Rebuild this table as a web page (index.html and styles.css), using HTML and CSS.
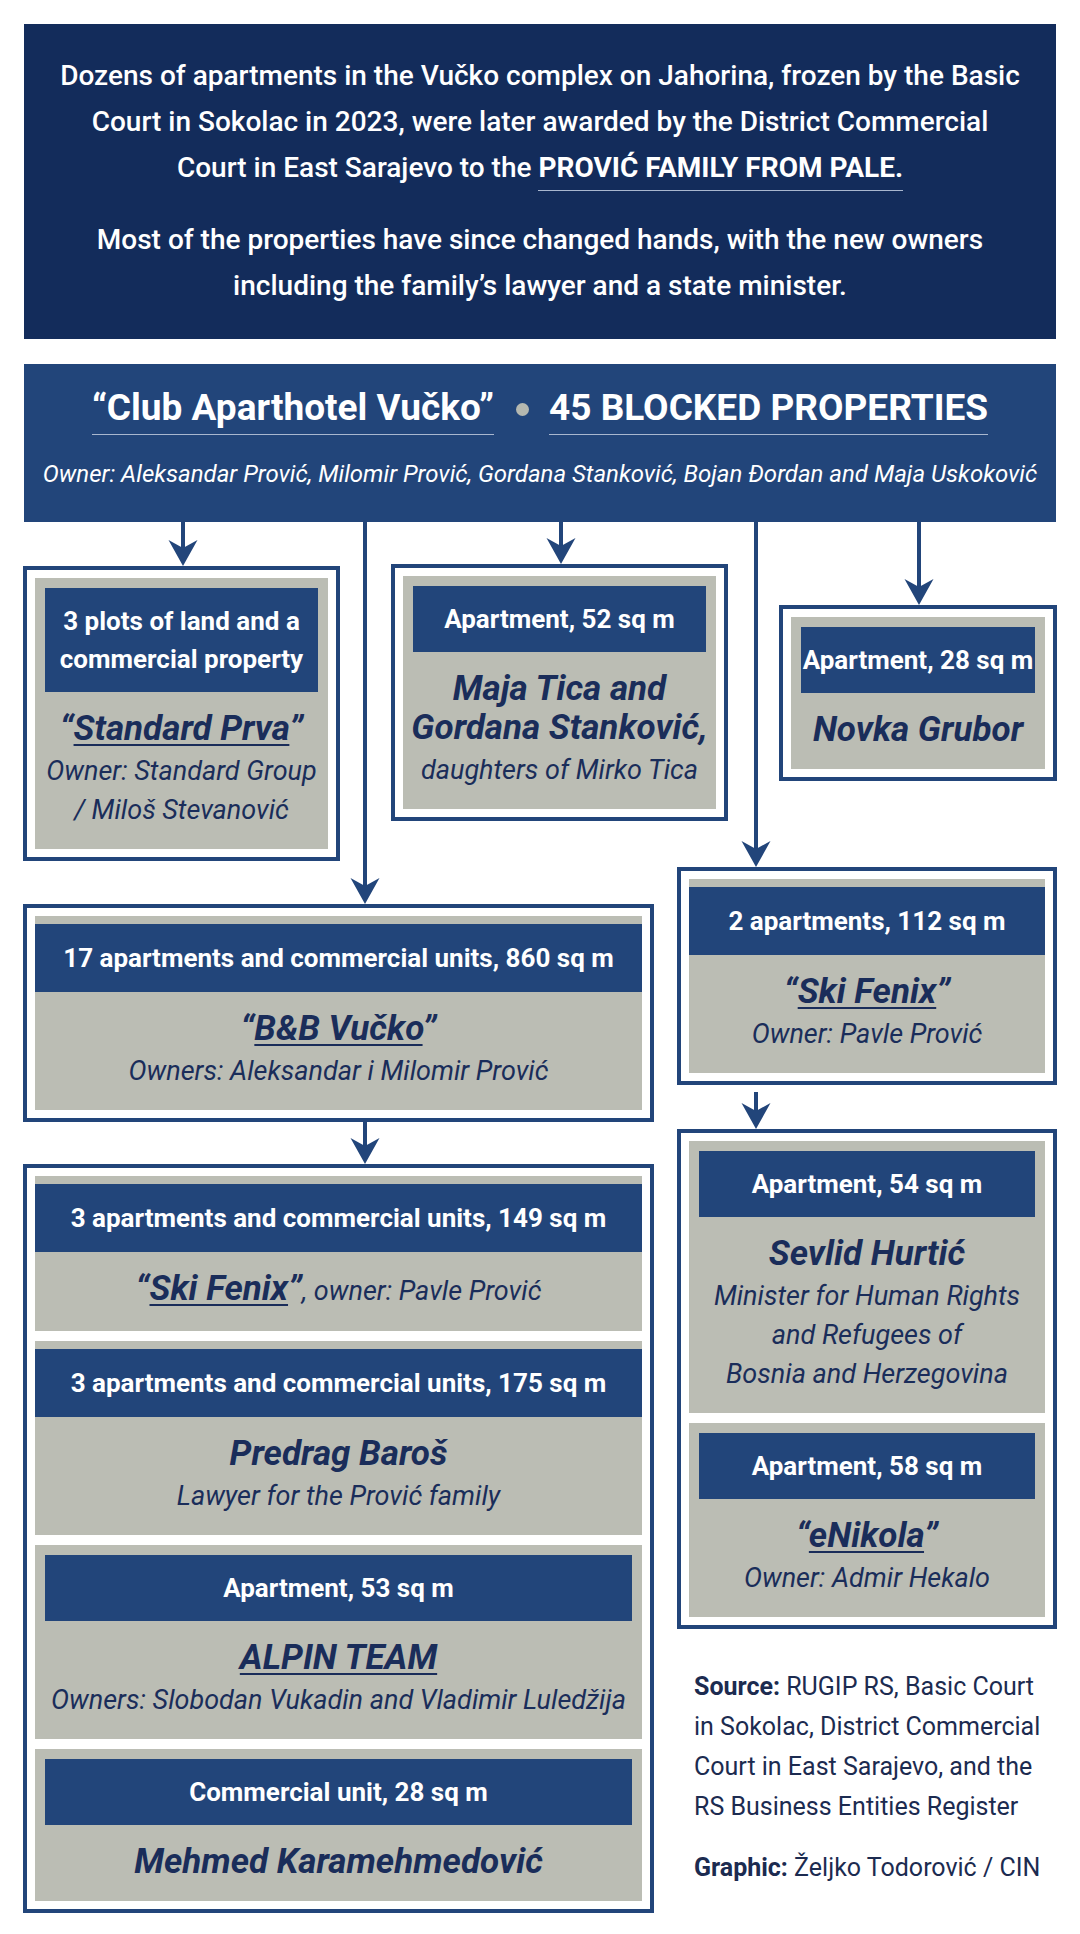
FILE: index.html
```html
<!DOCTYPE html>
<html lang="en">
<head>
<meta charset="utf-8">
<title>Club Aparthotel Vučko</title>
<link rel="stylesheet" href="styles.css">
</head>
<body>
<div class="page">
  <section class="intro">
    <p>Dozens of apartments in the Vučko complex on Jahorina, frozen by the Basic<br>Court in Sokolac in 2023, were later awarded by the District Commercial<br>Court in East Sarajevo to the <strong class="hl">PROVIĆ FAMILY FROM PALE.</strong></p>
    <p>Most of the properties have since changed hands, with the new owners<br>including the family’s lawyer and a state minister.</p>
  </section>

  <section class="head">
    <h1 class="head-title"><span class="ul">“Club Aparthotel Vučko”</span><span class="dot"></span><span class="ul">45 BLOCKED PROPERTIES</span></h1>
    <p class="head-owner">Owner: Aleksandar Prović, Milomir Prović, Gordana Stanković, Bojan Đordan and Maja Uskoković</p>
  </section>

  <div class="chart">
    <svg class="links" width="1034" height="700" viewBox="0 0 1034 700" aria-hidden="true">
      <g stroke="#22457a" stroke-width="4" fill="none">
        <line x1="160" y1="0" x2="160" y2="32"/>
        <line x1="342" y1="0" x2="342" y2="370"/>
        <line x1="538" y1="0" x2="538" y2="30"/>
        <line x1="733" y1="0" x2="733" y2="333"/>
        <line x1="896" y1="0" x2="896" y2="71"/>
        <line x1="342" y1="590" x2="342" y2="630"/>
        <line x1="733" y1="570" x2="733" y2="595"/>
      </g>
      <g fill="#22457a">
        <polygon points="145.5,18 160,26 174.5,18 160,44"/>
        <polygon points="327.5,356 342,364 356.5,356 342,382"/>
        <polygon points="523.5,16 538,24 552.5,16 538,42"/>
        <polygon points="718.5,319 733,327 747.5,319 733,345"/>
        <polygon points="881.5,57 896,65 910.5,57 896,83"/>
        <polygon points="327.5,616 342,624 356.5,616 342,642"/>
        <polygon points="718.5,581 733,589 747.5,581 733,607"/>
      </g>
    </svg>

    <div class="row-top">
      <div class="card card-a">
        <div class="panel">
          <div class="label">3 plots of land and a<br>commercial property</div>
          <div class="body">
            <div class="name">“<u>Standard Prva</u>”</div>
            <div class="sub">Owner: Standard Group<br>/ Miloš Stevanović</div>
          </div>
        </div>
      </div>
      <div class="card card-b">
        <div class="panel">
          <div class="label">Apartment, 52 sq m</div>
          <div class="body">
            <div class="name">Maja Tica and<br>Gordana Stanković,</div>
            <div class="sub">daughters of Mirko Tica</div>
          </div>
        </div>
      </div>
      <div class="card card-c">
        <div class="panel">
          <div class="label">Apartment, 28 sq m</div>
          <div class="body">
            <div class="name">Novka Grubor</div>
          </div>
        </div>
      </div>
    </div>

    <div class="row-bottom">
      <div class="col col-left">
        <div class="card">
          <div class="panel panel-wide">
            <div class="label wide">17 apartments and commercial units, 860 sq m</div>
            <div class="body">
              <div class="name">“<u>B&amp;B Vučko</u>”</div>
              <div class="sub">Owners: Aleksandar i Milomir Prović</div>
            </div>
          </div>
        </div>
        <div class="card card-big">
          <div class="panel panel-wide">
            <div class="label wide">3 apartments and commercial units, 149 sq m</div>
            <div class="body">
              <div class="name">“<u>Ski Fenix</u>”<span class="sub-inline">, owner: Pavle Prović</span></div>
            </div>
          </div>
          <div class="panel panel-wide">
            <div class="label wide">3 apartments and commercial units, 175 sq m</div>
            <div class="body">
              <div class="name">Predrag Baroš</div>
              <div class="sub">Lawyer for the Prović family</div>
            </div>
          </div>
          <div class="panel">
            <div class="label">Apartment, 53 sq m</div>
            <div class="body">
              <div class="name"><u>ALPIN TEAM</u></div>
              <div class="sub">Owners: Slobodan Vukadin and Vladimir Luledžija</div>
            </div>
          </div>
          <div class="panel">
            <div class="label">Commercial unit, 28 sq m</div>
            <div class="body">
              <div class="name">Mehmed Karamehmedović</div>
            </div>
          </div>
        </div>
      </div>

      <div class="col col-right">
        <div class="card">
          <div class="panel panel-wide">
            <div class="label wide">2 apartments, 112 sq m</div>
            <div class="body">
              <div class="name">“<u>Ski Fenix</u>”</div>
              <div class="sub">Owner: Pavle Prović</div>
            </div>
          </div>
        </div>
        <div class="card card-pair">
          <div class="panel">
            <div class="label">Apartment, 54 sq m</div>
            <div class="body">
              <div class="name">Sevlid Hurtić</div>
              <div class="sub">Minister for Human Rights<br>and Refugees of<br>Bosnia and Herzegovina</div>
            </div>
          </div>
          <div class="panel">
            <div class="label">Apartment, 58 sq m</div>
            <div class="body">
              <div class="name">“<u>eNikola</u>”</div>
              <div class="sub">Owner: Admir Hekalo</div>
            </div>
          </div>
        </div>
        <div class="source">
          <p><b>Source:</b> RUGIP RS, Basic Court<br>in Sokolac, District Commercial<br>Court in East Sarajevo, and the<br>RS Business Entities Register</p>
          <p><b>Graphic:</b> Željko Todorović / CIN</p>
        </div>
      </div>
    </div>
  </div>
</div>
</body>
</html>
```

FILE: styles.css
```css
* { box-sizing: border-box; }

html, body {
  margin: 0;
  padding: 0;
  background: #ffffff;
}

body {
  font-family: Roboto, "Liberation Sans", Arial, sans-serif;
  color: #1a2d5a;
}

.page {
  width: 1080px;
  padding: 24px 23px 20px;
}

/* Intro block */
.intro {
  margin: 0 1px;
  background: #132c5b;
  color: #ffffff;
  text-align: center;
  padding: 29px 0 30px;
  font-size: 28px;
  font-weight: 500;
  line-height: 46px;
  white-space: nowrap;
}

.intro p {
  margin: 0;
}

.intro p + p {
  margin-top: 26px;
}

.intro .hl {
  font-weight: 700;
  padding-bottom: 6px;
  border-bottom: 1px solid #a9b7cf;
}

/* Header block */
.head {
  margin: 25px 1px 0;
  background: #22457a;
  color: #ffffff;
  text-align: center;
  padding: 20px 0 0;
  height: 158px;
}

.head-title {
  margin: 0;
  font-size: 37px;
  font-weight: 700;
  line-height: 44px;
  display: flex;
  justify-content: center;
  align-items: center;
  white-space: nowrap;
}

.head-title .ul {
  padding-bottom: 6px;
  border-bottom: 1px solid #a9b7cf;
  line-height: 40px;
  margin-top: 4px;
}

.dot {
  width: 13px;
  height: 13px;
  border-radius: 50%;
  background: #b5b8b0;
  margin: 0 20px 0 22px;
}

.head-owner {
  margin: 24px 0 0;
  font-size: 24px;
  font-style: italic;
  line-height: 30px;
  white-space: nowrap;
}

/* Chart */
.chart {
  position: relative;
  width: 1034px;
}

.links {
  position: absolute;
  left: 0;
  top: 0;
  z-index: 0;
}

.row-top {
  display: flex;
  align-items: flex-start;
  gap: 51px;
}

.row-bottom {
  display: flex;
  align-items: flex-start;
  gap: 23px;
}

.col {
  display: flex;
  flex-direction: column;
}

.col-left {
  width: 631px;
  margin-top: 43px;
  gap: 42px;
}

.col-right {
  width: 380px;
  margin-top: 6px;
  gap: 44px;
}

.card {
  position: relative;
  z-index: 1;
  background: #ffffff;
  border: 4px solid #22457a;
  padding: 8px;
  display: flex;
  flex-direction: column;
  gap: 10px;
}

.card-a { width: 317px; margin-top: 44px; }
.card-b { width: 337px; margin-top: 42px; }
.card-c { width: 278px; margin-top: 83px; }

.panel {
  background: #bbbdb4;
  padding: 10px 10px 19px;
}

.panel-wide {
  padding-top: 8px;
}

.label {
  background: #22457a;
  color: #ffffff;
  font-size: 26px;
  font-weight: 700;
  line-height: 38px;
  padding: 14px 0;
  text-align: center;
  white-space: nowrap;
}

.label.wide {
  margin: 0 -10px;
  padding: 15px 0;
}

.body {
  margin: 0 -10px;
  padding-top: 17px;
  text-align: center;
  white-space: nowrap;
  color: #1a2d5a;
}

.name {
  font-size: 35px;
  font-weight: 700;
  font-style: italic;
  line-height: 39px;
}

.name:last-child {
  margin-bottom: 1px;
}

.name u {
  text-decoration-thickness: 2px;
  text-underline-offset: 4px;
}

.sub {
  margin-top: 4px;
  font-size: 27px;
  font-style: italic;
  font-weight: 400;
  line-height: 39px;
}

.sub-inline {
  font-size: 27px;
  font-weight: 400;
}

.source {
  margin-top: -6px;
  padding-left: 17px;
  font-size: 25px;
  line-height: 40px;
  color: #1c2b50;
}

.source p {
  margin: 0;
}

.source p + p {
  margin-top: 21px;
}

.source b {
  font-weight: 700;
}
```
